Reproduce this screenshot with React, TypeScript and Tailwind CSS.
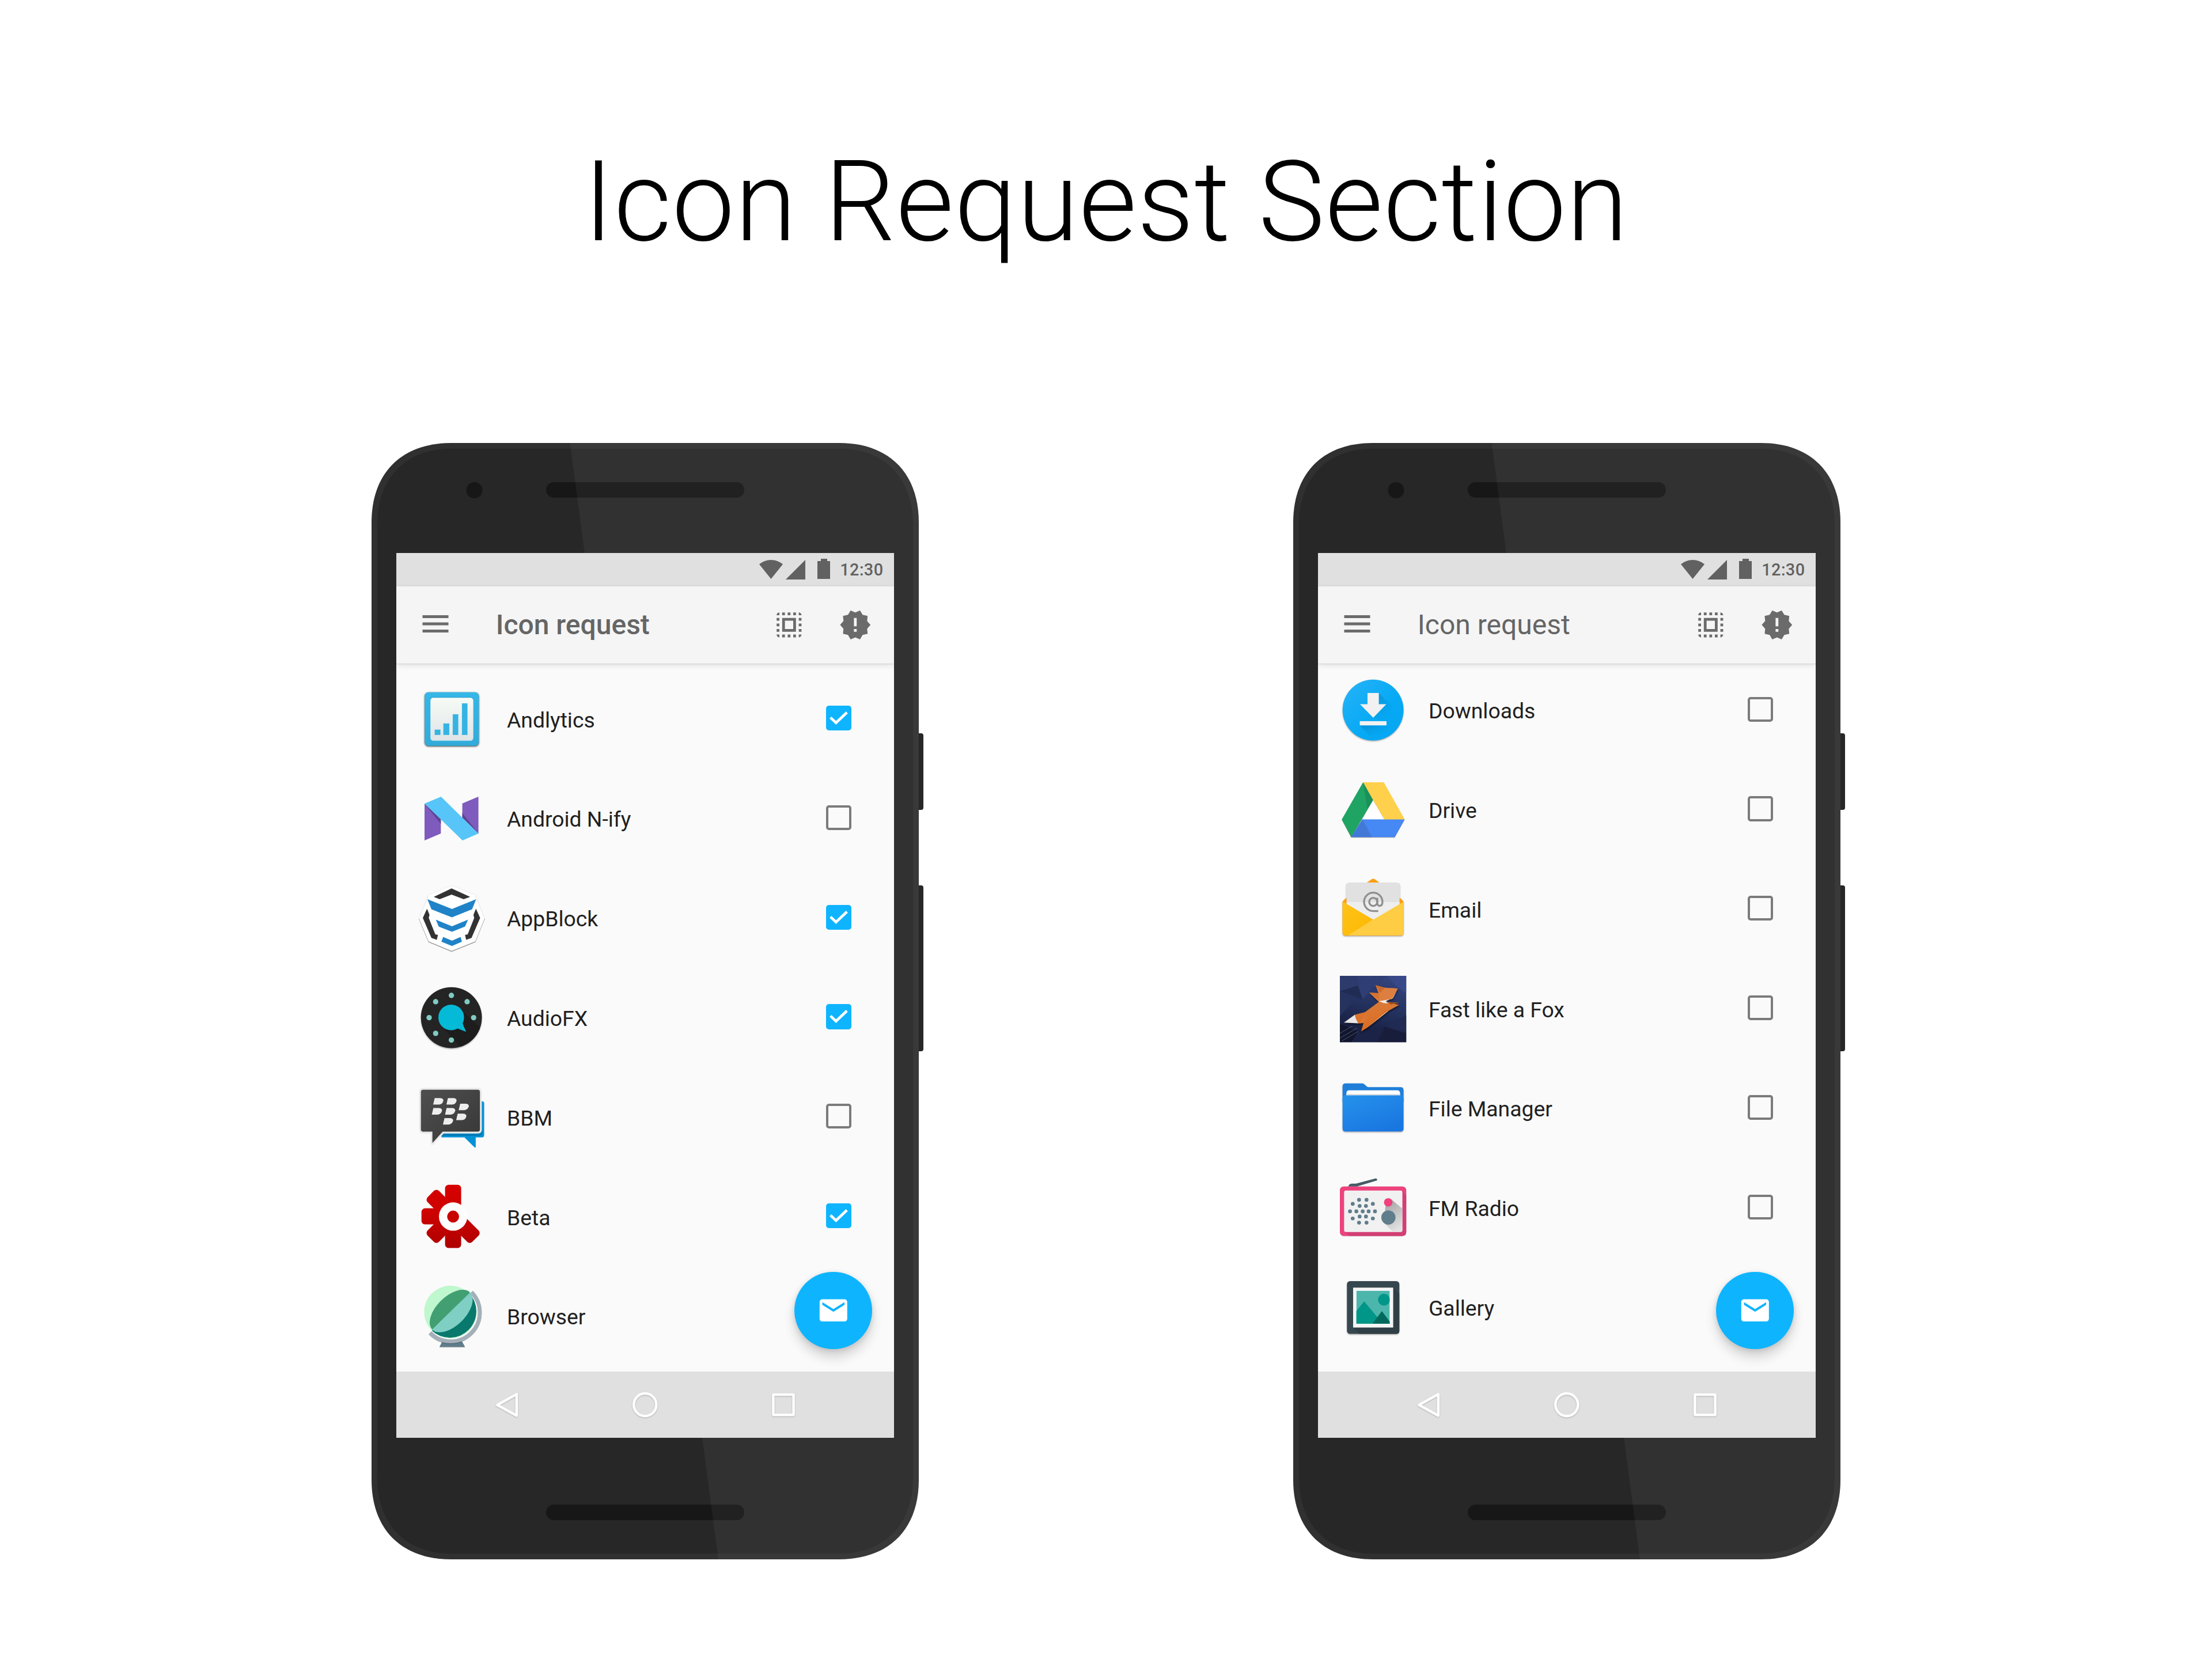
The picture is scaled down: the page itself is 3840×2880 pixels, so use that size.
import React from "react";

/* ---------- App icons, drawn on a 346 unit canvas ---------- */

function AppIcon({ children }: { children: React.ReactNode }) {
  return (
    <svg viewBox="0 0 346 346" className="block size-[115.2px] shrink-0 overflow-visible">
      {children}
    </svg>
  );
}

const lift = { filter: "drop-shadow(0 4px 3px rgba(0,0,0,.35))" };

function Andlytics() {
  return (
    <AppIcon>
      <defs>
        <linearGradient id="an-frame" x1="0" y1="0" x2="0" y2="1">
          <stop offset="0" stopColor="#35b7e8" />
          <stop offset="1" stopColor="#32abd9" />
        </linearGradient>
        <linearGradient id="an-panel" x1="0" y1="0" x2="0" y2="1">
          <stop offset="0" stopColor="#f7fbf5" />
          <stop offset="1" stopColor="#dfe4e7" />
        </linearGradient>
      </defs>
      <rect x="34" y="32" width="282" height="280" rx="20" fill="url(#an-frame)" style={{ filter: "drop-shadow(0 3px 5px rgba(0,0,0,.8))" }} />
      <rect x="63" y="58" width="225" height="226" rx="16" fill="#2b97c9" />
      <rect x="64" y="62" width="223" height="224" rx="14" fill="#7fd0ee" />
      <rect x="64" y="61" width="223" height="223" rx="14" fill="url(#an-panel)" />
      <g fill="#35b4e4">
        <rect x="86" y="227" width="30" height="28" />
        <rect x="131" y="195" width="31" height="60" />
        <rect x="180" y="147" width="29" height="108" />
        <rect x="228" y="90" width="29" height="165" />
      </g>
    </AppIcon>
  );
}

function AndroidNify() {
  return (
    <AppIcon>
      <path d="M33 96V288L118 252V176Z" fill="#7e5bbd" />
      <path d="M230 95L314 60V252L230 170Z" fill="#7e5bbd" />
      <path d="M34 98L118 202V176Z" fill="#5f4492" />
      <path d="M230 145L314 252L230 170Z" fill="#5f4492" />
      <path d="M33 96L119 60L314 252L231 288Z" fill="#57c5f7" />
    </AppIcon>
  );
}

function AppBlock() {
  const side = "M46 125L59 157L55 173L89 258L103 261L97 287L69 277L24 173Z";
  return (
    <AppIcon>
      <path
        d="M174 3L298 53L346 175L298 295L174 345L54 295L4 175L54 53Z"
        fill="#fff"
        stroke="#e6e6e6"
        strokeWidth="2"
        style={{ filter: "drop-shadow(0 3px 2px rgba(0,0,0,.55))" }}
      />
      <g fill="#333">
        <path d="M81 63L174 19L271 63L237 75L174 51L112 75Z" />
        <path d={side} />
        <path d={side} transform="matrix(-1 0 0 1 347 0)" />
      </g>
      <g fill="#2083c7">
        <path d="M48 75L176 126L302 75L281 128L176 170L69 128Z" />
        <path d="M92 182L176 216L260 182L244 218L176 245L107 218Z" />
        <path d="M130 272L176 291L221 272L228 297L176 319L121 297Z" />
      </g>
    </AppIcon>
  );
}

function AudioFX() {
  const dots = [[173, 57], [255, 90], [289, 173], [173, 290], [91, 255], [57, 173], [91, 90]];
  return (
    <AppIcon>
      <defs>
        <clipPath id="fx-disc"><circle cx="173" cy="173" r="159" /></clipPath>
      </defs>
      <circle cx="173" cy="173" r="159" fill="#242424" style={lift} />
      <path d="M222 127L346 250V346H240L130 226Z" fill="#1d1d1d" clipPath="url(#fx-disc)" />
      {dots.map(([x, y]) => <circle key={`${x}-${y}`} cx={x} cy={y} r="14" fill="#80cbc4" />)}
      <circle cx="172" cy="172" r="67" fill="#05bad6" />
      <path d="M232 202Q234 212 250 247L204 229Z" fill="#05bad6" />
    </AppIcon>
  );
}

function Bbm() {
  const marks = [[78, 73], [147, 73], [71, 125], [140, 125], [211, 102], [198, 154], [129, 177]];
  const bubble = "M26 29H310Q322 29 322 41V236Q322 248 310 248H128L74 307V248H26Q14 248 14 236V41Q14 29 26 29Z";
  return (
    <AppIcon>
      <defs>
        <linearGradient id="bbm-body" x1="0" y1="0" x2="1" y2="1">
          <stop offset="0" stopColor="#4f4f4f" />
          <stop offset="1" stopColor="#373737" />
        </linearGradient>
      </defs>
      <path d="M121 89H332Q344 89 344 101V266Q344 278 332 278H300V328Q298 333 293 329L241 278H121Z" fill="#0293d6" />
      <path d="M121 260H318Q332 260 336 240V256Q334 270 318 270H121Z" fill="#0379b3" />
      <path d={bubble} fill="#e9e9e9" stroke="#e9e9e9" strokeWidth="19" strokeLinejoin="round" />
      <path d={bubble} fill="url(#bbm-body)" />
      {marks.map(([x, y]) => (
        <path key={`${x}-${y}`} d="M8 0H38Q54 2 53 14Q48 33 30 34H0Z" transform={`translate(${x} ${y})`} fill="#ededed" />
      ))}
    </AppIcon>
  );
}

function Beta() {
  return (
    <AppIcon>
      <defs>
        <linearGradient id="beta-red" gradientUnits="userSpaceOnUse" x1="0" y1="5" x2="0" y2="334">
          <stop offset="0" stopColor="#d60000" />
          <stop offset=".45" stopColor="#cc0300" />
          <stop offset="1" stopColor="#ae0000" />
        </linearGradient>
        <mask id="beta-teeth">
          {[0, -45, -90, -135, 180, 135].map((a) => (
            <rect key={a} x="140" y="5" width="84" height="150" rx="19" fill="#fff" transform={`rotate(${a} 182 170)`} />
          ))}
        </mask>
      </defs>
      <rect width="360" height="346" fill="url(#beta-red)" mask="url(#beta-teeth)" />
      <circle cx="182" cy="171" r="74" fill="#fdfdfd" />
      <circle cx="182" cy="171" r="31" fill="#c80400" />
    </AppIcon>
  );
}

function Browser() {
  return (
    <AppIcon>
      <path d="M126 305H228L244 334H111Z" fill="#607d8b" style={{ filter: "drop-shadow(0 2px 1px rgba(0,0,0,.35))" }} />
      <path d="M278 48A150 150 0 0 1 62 260" fill="none" stroke="#a3b0b9" strokeWidth="20" style={{ filter: "drop-shadow(0 2px 2px rgba(0,0,0,.4))" }} />
      <circle cx="168" cy="152" r="137" fill="#bff7cf" />
      <path d="M266 54A138 138 0 0 1 72 250Z" fill="#08796c" />
      <g transform="translate(172 147) rotate(-44.5)">
        <path d="M-138 0A138 76 0 0 1 138 0Z" fill="#419f72" />
        <path d="M-138 0A138 76 0 0 0 138 0Z" fill="#80cfc5" />
      </g>
    </AppIcon>
  );
}

function Downloads() {
  return (
    <AppIcon>
      <defs>
        <linearGradient id="dl-disc" x1="0" y1="0" x2="1" y2="1">
          <stop offset="0" stopColor="#27b3f7" />
          <stop offset=".6" stopColor="#06a9f5" />
          <stop offset="1" stopColor="#06a6f2" />
        </linearGradient>
        <linearGradient id="dl-cast" x1="0" y1="0" x2="1" y2="1">
          <stop offset="0" stopColor="#05629a" stopOpacity=".6" />
          <stop offset=".75" stopColor="#0590d5" stopOpacity="0" />
        </linearGradient>
      </defs>
      <circle cx="173" cy="173" r="159" fill="url(#dl-disc)" style={lift} />
      <path d="M203 84L306 186Q290 230 250 235L174 213L203 170Z" fill="url(#dl-cast)" opacity=".7" />
      <path d="M104 253H243L262 300Q220 332 174 328Z" fill="url(#dl-cast)" opacity=".6" />
      <path d="M144 84H203V143H242L174 213L105 143H144Z" fill="#f1f1f1" />
      <rect x="104" y="231" width="139" height="22" fill="#f1f1f1" />
    </AppIcon>
  );
}

function Drive() {
  return (
    <AppIcon>
      <g style={{ filter: "drop-shadow(0 3px 2px rgba(0,0,0,.35))" }}>
        <path d="M121 30L173 123L59 316L10 224Z" fill="#1fa463" />
        <path d="M117 223H338L286 316H59Z" fill="#4688f4" />
        <path d="M121 30H229L338 224H231Z" fill="#ffd04b" />
      </g>
      <path d="M173 123L231 223H117Z" fill="#fff" />
      <path d="M121 30L173 123L144 170Z" fill="#1a8a58" opacity=".75" />
      <path d="M117 223L168 316H59Z" fill="#3f6fc4" opacity=".6" />
    </AppIcon>
  );
}

function Email() {
  return (
    <AppIcon>
      <defs>
        <linearGradient id="em-fold" x1="0" y1="0" x2="1" y2="1">
          <stop offset="0" stopColor="#ffc21a" />
          <stop offset="1" stopColor="#fdb900" />
        </linearGradient>
      </defs>
      <path d="M14 132L36 110H310L332 132V294Q332 310 316 310H30Q14 310 14 294Z" fill="#ff9e13" style={lift} />
      <path d="M141 33L164 17Q174 10 184 17L206 33Z" fill="#ff9e13" />
      <path d="M29 55Q29 33 51 33H295Q317 33 317 55V112L311 116V240H35V116L29 112Z" fill="#e1e1e1" />
      <path d="M35 135H311V240H35Z" fill="#eeeeee" />
      <g fill="none" stroke="#8f8f8f" strokeWidth="10">
        <circle cx="174" cy="134" r="21" />
        <path d="M195 113V142Q197 155 209 155Q222 153 222 134A48 48 0 1 0 174 182H200" />
      </g>
      <path d="M14 132L174 227L41 309H30Q14 309 14 294Z" fill="url(#em-fold)" />
      <path d="M332 134V294Q332 309 316 309H41L174 227Z" fill="#ffcd43" />
    </AppIcon>
  );
}

function Fox() {
  return (
    <AppIcon>
      <defs>
        <linearGradient id="fox-sky" x1=".7" y1="0" x2=".4" y2="1">
          <stop offset="0" stopColor="#34457f" />
          <stop offset=".5" stopColor="#22305c" />
          <stop offset="1" stopColor="#161b38" />
        </linearGradient>
        <linearGradient id="fox-fur" x1="0" y1="0" x2="0" y2="1">
          <stop offset="0" stopColor="#d98145" />
          <stop offset="1" stopColor="#db6c20" />
        </linearGradient>
      </defs>
      <rect width="346" height="346" fill="url(#fox-sky)" />
      <path d="M0 0H90L94 50L0 80Z" fill="#2d3b6c" />
      <path d="M94 50L120 125L0 80Z" fill="#212c55" />
      <path d="M94 50L180 0H250L170 60L120 125Z" fill="#2f3f75" />
      <path d="M0 80L65 140L0 210Z" fill="#27335f" />
      <path d="M250 0H346V90L290 50Z" fill="#38498a" />
      <path d="M235 265L346 205V300Z" fill="#202a52" />
      <path d="M235 265L346 300V346H195Z" fill="#181d3b" />
      <path d="M0 250L95 290L60 346H0Z" fill="#12162c" />
      <path d="M95 290L235 265L195 346H60Z" fill="#1b2347" />
      <path d="M0 300L65 262M0 325L90 272M10 340L95 290" stroke="#6b7498" strokeWidth="2" />
      <g style={{ filter: "drop-shadow(3px 6px 4px rgba(0,0,0,.55))" }}>
        <path d="M21 244L78 203L97 248Z" fill="#e9e6e6" />
        <path d="M78 203L131 189L203 136L153 88L201 90L186 49L236 62L302 66L273 120L232 130L250 137L309 141L280 146L309 152L253 183L191 232L141 272L111 290L123 246L97 248Q82 228 78 203Z" fill="url(#fox-fur)" />
      </g>
      <path d="M186 49L236 62L209 88Z" fill="#c96a2c" />
      <path d="M153 88L201 90L206 125Z" fill="#d5732f" />
      <path d="M236 62L302 66L273 120L205 128Q205 85 236 62Z" fill="#dc7f40" />
      <path d="M203 132L273 120L302 68L278 116L240 132L250 144L228 142Z" fill="#f1ece8" />
      <path d="M250 137L309 141L265 150Z" fill="#a6501b" />
      <path d="M253 183L191 232L141 272L245 184Z" fill="#f0dccd" />
      <path d="M253 181L191 226L150 258L240 180Z" fill="#d96c22" />
      <path d="M131 189L150 220L123 246L97 248Q120 225 131 189Z" fill="#dd7632" />
    </AppIcon>
  );
}

function FileManager() {
  return (
    <AppIcon>
      <defs>
        <linearGradient id="fm-front" x1="0" y1="0" x2=".6" y2="1">
          <stop offset="0" stopColor="#2592ec" />
          <stop offset="1" stopColor="#1a77e1" />
        </linearGradient>
      </defs>
      <g style={lift}>
        <path d="M14 60Q14 44 30 44H116Q124 44 129 50L141 61Q144 64 150 64H316Q332 64 332 80V140H14Z" fill="#1f7fd8" />
        <path d="M34 96Q34 80 50 80H298Q314 80 314 96V120H34Z" fill="#fff" />
        <path d="M34 100H314V120H34Z" fill="#d9dcdf" />
        <path d="M14 122Q14 107 30 107H316Q332 107 332 122V279Q332 295 316 295H30Q14 295 14 279Z" fill="url(#fm-front)" />
      </g>
    </AppIcon>
  );
}

function FmRadio() {
  const holes = [
    [100, 132], [139, 132], [67, 153], [172, 153], [103, 164], [136, 164], [53, 192], [86, 192], [119, 192],
    [150, 192], [183, 192], [67, 229], [172, 229], [103, 219], [136, 219], [100, 251], [139, 251],
  ];
  return (
    <AppIcon>
      <defs>
        <linearGradient id="rd-cast" gradientUnits="userSpaceOnUse" x1="245" y1="150" x2="330" y2="270">
          <stop offset="0" stopColor="#8f8f8f" />
          <stop offset="1" stopColor="#dedede" />
        </linearGradient>
      </defs>
      <path d="M44 62Q46 48 62 47H84L186 20Q196 19 194 31L98 59L90 62Z" fill="#465b65" />
      <rect y="62" width="346" height="258" rx="20" fill="#ee427d" style={{ filter: "drop-shadow(0 1px 1px rgba(0,0,0,.35))" }} />
      <path d="M326 85L346 108V300Q346 320 326 320H48L26 298H326Z" fill="#d23f74" />
      <rect x="22" y="83" width="304" height="217" rx="10" fill="#f1f1f1" />
      <path d="M268 129L326 178V290Q326 300 316 300H278L228 250L238 165Z" fill="url(#rd-cast)" opacity=".75" />
      {holes.map(([x, y]) => <circle key={`${x}-${y}`} cx={x} cy={y} r="10" fill="#607d8b" />)}
      <circle cx="252" cy="145" r="22" fill="#f1407d" />
      <circle cx="253" cy="224" r="37" fill="#607d8b" />
    </AppIcon>
  );
}

function Gallery() {
  return (
    <AppIcon>
      <defs>
        <clipPath id="ga-pic"><rect x="86" y="86" width="174" height="172" /></clipPath>
      </defs>
      <rect x="37" y="36" width="273" height="275" rx="16" fill="#37474f" style={lift} />
      <path d="M278 70L310 100V295Q310 311 294 311H100L69 278H278Z" fill="#303f46" />
      <rect x="69" y="70" width="209" height="208" fill="#f5f5f5" />
      <g clipPath="url(#ga-pic)">
        <rect x="86" y="86" width="174" height="172" fill="#4db6ac" />
        <circle cx="230" cy="133" r="31" fill="#009688" />
        <path d="M74 205L127 142L230 265H74Z" fill="#009688" />
        <path d="M170 258L219 192L268 258Z" fill="#00695c" />
      </g>
    </AppIcon>
  );
}

/* ---------- Controls ---------- */

function Checkbox({ checked }: { checked: boolean }) {
  if (!checked) {
    return <div className="size-[43.2px] rounded-[5px] border-[4.8px] border-[#7b7b7b]" />;
  }
  return (
    <div className="size-[43.2px] rounded-[5px] bg-[#0fb4ff]">
      <svg viewBox="3 3 18 18" className="block size-full" fill="none">
        <path d="M6.2 11.6L10.2 15.4L18.1 7.9" stroke="#fff" strokeWidth="1.9" />
      </svg>
    </div>
  );
}

function StatusBar() {
  return (
    <div className="flex h-[57.6px] shrink-0 items-center justify-end bg-[#e0e0e0] pr-[18.6px] text-[#616161]">
      <svg viewBox="0 0 41 33" className="h-[33px] w-[41px]" fill="currentColor">
        <path d="M0 7.5Q9 0 20.5 0T41 7.5L20.5 33Z" />
      </svg>
      <svg viewBox="0 0 34 34" className="ml-[5px] size-[34px]" fill="currentColor">
        <path d="M34 0V34H0Z" />
      </svg>
      <svg viewBox="0 0 22 35" className="mb-[2px] ml-[21px] h-[35px] w-[22px]" fill="currentColor">
        <path d="M6 0H17V4H22V35H0V4H6Z" />
      </svg>
      <span className="mt-[2px] ml-[17.5px] text-[28.8px] leading-none font-medium tracking-[0.4px]">12:30</span>
    </div>
  );
}

function Toolbar({ bold }: { bold: boolean }) {
  return (
    <div className="relative z-10 flex h-[134.4px] shrink-0 items-center bg-[#f5f5f5] pr-[38.4px] pl-[37.5px] text-[#6b6b6b] shadow-[0_1px_1px_rgba(0,0,0,0.10),0_3px_10px_rgba(0,0,0,0.10)]">
      <svg viewBox="0 0 24 24" className="mb-[3px] size-[60px]" fill="currentColor">
        <path d="M3 18h18v-2H3v2zm0-5h18v-2H3v2zm0-7v2h18V6H3z" />
      </svg>
      <span className={bold ? "ml-[75.3px] text-[48px] leading-none font-medium text-[#656565]" : "ml-[75.3px] text-[48px] leading-none font-normal text-[#656565]"}>
        Icon request
      </span>
      <svg viewBox="0 0 24 24" className="ml-auto size-[57.6px]" fill="currentColor">
        <path d="M3 5h2V3c-1.1 0-2 .9-2 2zm0 8h2v-2H3v2zm4 8h2v-2H7v2zM3 9h2V7H3v2zm10-6h-2v2h2V3zm6 0v2h2c0-1.1-.9-2-2-2zM5 21v-2H3c0 1.1.9 2 2 2zm-2-4h2v-2H3v2zM9 3H7v2h2V3zm2 18h2v-2h-2v2zm8-8h2v-2h-2v2zm0 8c1.1 0 2-.9 2-2h-2v2zm0-12h2V7h-2v2zm0 8h2v-2h-2v2zm-4 4h2v-2h-2v2zm0-16h2V3h-2v2zM7 17h10V7H7v10zm2-8h6v6H9V9z" />
      </svg>
      <svg viewBox="0 0 24 24" className="ml-[57.6px] size-[57.6px]" fill="currentColor">
        <path d="M23 12l-2.44-2.78.34-3.68-3.61-.82-1.89-3.18L12 3 8.6 1.54 6.71 4.72l-3.61.81.34 3.68L1 12l2.44 2.78-.34 3.69 3.61.82 1.89 3.18L12 21l3.4 1.46 1.89-3.18 3.61-.82-.34-3.68L23 12zm-10 5h-2v-2h2v2zm0-4h-2V7h2v6z" />
      </svg>
    </div>
  );
}

function NavBar() {
  return (
    <div className="flex h-[115.2px] shrink-0 items-center justify-center gap-[182.4px] bg-[#e0e0e0]">
      {[
        <path key="back" d="M45.8 10.3V47.5L12.3 29Z" />,
        <circle key="home" cx="28.8" cy="28.6" r="19.6" />,
        <rect key="recent" x="11.4" y="11" width="35.2" height="35.2" rx="1" />,
      ].map((shape) => (
        <svg
          key={shape.key}
          viewBox="0 0 57.6 57.6"
          className="size-[57.6px] drop-shadow-[0_1.5px_1px_rgba(0,0,0,0.22)]"
          fill="none"
          stroke="#fff"
          strokeWidth="4.4"
          strokeLinejoin="round"
        >
          {shape}
        </svg>
      ))}
    </div>
  );
}

type Row = { name: string; icon: React.ReactNode; checked?: boolean };

function ListRow({ row, last }: { row: Row; last: boolean }) {
  return (
    <div className="flex h-[172.8px] items-center pr-[74.4px] pl-[38.4px]">
      {row.icon}
      <span className="mt-[4px] ml-[38.4px] text-[37.3px] leading-none text-[#212121]">{row.name}</span>
      {!last && (
        <div className="mb-[3px] ml-auto">
          <Checkbox checked={!!row.checked} />
        </div>
      )}
    </div>
  );
}

/* ---------- Device ---------- */

const outerShape =
  "M0 138C0 52 52 0 138 0H812C898 0 950 52 950 138V1800C950 1886 898 1938 812 1938H138C52 1938 0 1886 0 1800Z";
const innerShape =
  "M10 142C10 62 58 10 138 10H812C892 10 940 62 940 142V1796C940 1876 892 1928 812 1928H138C58 1928 10 1876 10 1796Z";

function Chassis({ id }: { id: string }) {
  return (
    <svg viewBox="0 0 950 1938" className="absolute inset-0 h-[1938px] w-[950px]">
      <defs>
        <clipPath id={id}><path d={outerShape} /></clipPath>
      </defs>
      <path d={outerShape} fill="#303030" />
      <path d={innerShape} fill="#272727" />
      <circle cx="178.5" cy="82" r="14" fill="#171717" />
      <rect x="303" y="68" width="344" height="27" rx="13.5" fill="#171717" />
      <rect x="303" y="1843" width="344" height="27" rx="13.5" fill="#171717" />
      <path d="M344.5 0H950V1938H602Z" fill="#fff" fillOpacity=".046" clipPath={`url(#${id})`} />
    </svg>
  );
}

function Phone({ id, rows, boldTitle, scrolled }: { id: string; rows: Row[]; boldTitle: boolean; scrolled: boolean }) {
  return (
    <div className="relative h-[1938px] w-[950px] px-[43px] pt-[191px]">
      <div className="absolute top-[504px] -right-[8px] h-[133px] w-[12px] rounded-[4px] bg-[#272727]" />
      <div className="absolute top-[768px] -right-[8px] h-[288px] w-[12px] rounded-[4px] bg-[#272727]" />
      <Chassis id={id} />
      <div className="relative flex h-[1536px] w-[864px] flex-col overflow-hidden bg-[#fafafa]">
        <StatusBar />
        <Toolbar bold={boldTitle} />
        <div className="relative min-h-0 flex-1 overflow-hidden">
          <div className={scrolled ? "-mt-[5.6px]" : "mt-[9.8px]"}>
            {rows.map((row, i) => (
              <ListRow key={row.name} row={row} last={i === rows.length - 1} />
            ))}
          </div>
          <div className="absolute right-[38.4px] bottom-[38.4px] flex size-[134.4px] items-center justify-center rounded-full bg-[#0fb4ff] shadow-[0_14px_20px_rgba(0,0,0,0.16),0_2px_10px_rgba(0,0,0,0.12)]">
            <svg viewBox="0 0 24 24" className="size-[57.6px]" fill="#fff">
              <path d="M20 4H4c-1.1 0-1.99.9-1.99 2L2 18c0 1.1.9 2 2 2h16c1.1 0 2-.9 2-2V6c0-1.1-.9-2-2-2zm0 4l-8 5-8-5V6l8 5 8-5v2z" />
            </svg>
          </div>
        </div>
        <NavBar />
      </div>
    </div>
  );
}

const leftRows: Row[] = [
  { name: "Andlytics", icon: <Andlytics />, checked: true },
  { name: "Android N-ify", icon: <AndroidNify /> },
  { name: "AppBlock", icon: <AppBlock />, checked: true },
  { name: "AudioFX", icon: <AudioFX />, checked: true },
  { name: "BBM", icon: <Bbm /> },
  { name: "Beta", icon: <Beta />, checked: true },
  { name: "Browser", icon: <Browser /> },
];

const rightRows: Row[] = [
  { name: "Downloads", icon: <Downloads /> },
  { name: "Drive", icon: <Drive /> },
  { name: "Email", icon: <Email /> },
  { name: "Fast like a Fox", icon: <Fox /> },
  { name: "File Manager", icon: <FileManager /> },
  { name: "FM Radio", icon: <FmRadio /> },
  { name: "Gallery", icon: <Gallery /> },
];

export default function App() {
  return (
    <div className="flex h-[2880px] w-[3840px] flex-col items-center overflow-hidden bg-white font-['Roboto',sans-serif]">
      <h1 className="flex h-[769px] shrink-0 items-start pt-[255px] text-[194px] leading-[192px] font-light tracking-[0.8px] whitespace-nowrap text-black">
        Icon Request Section
      </h1>
      <div className="flex gap-[650px]">
        <Phone id="body-left" rows={leftRows} boldTitle scrolled={false} />
        <Phone id="body-right" rows={rightRows} boldTitle={false} scrolled />
      </div>
    </div>
  );
}
